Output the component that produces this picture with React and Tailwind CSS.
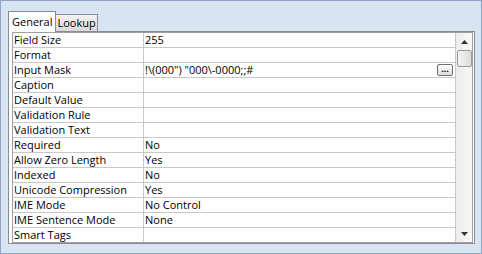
const rows = [
  ['Field Size', '255'],
  ['Format', ''],
  ['Input Mask', '!\\(000") "000\\-0000;;#', true],
  ['Caption', ''],
  ['Default Value', ''],
  ['Validation Rule', ''],
  ['Validation Text', ''],
  ['Required', 'No'],
  ['Allow Zero Length', 'Yes'],
  ['Indexed', 'No'],
  ['Unicode Compression', 'Yes'],
  ['IME Mode', 'No Control'],
  ['IME Sentence Mode', 'None'],
  ['Smart Tags', ''],
]

function PropRow({ label, value, button }) {
  return (
    <div className="flex h-[15px] border-b border-[#c8c8c8] last:border-b-0 last:h-[14px] leading-[14px]">
      <div className="w-[131px] shrink-0 border-r border-[#c8c8c8] pl-[1px]">{label}</div>
      <div className="flex-1 flex items-center pl-[1px] pr-[2px]">
        <span className="flex-1">{value}</span>
        {button && (
          <span className="h-[12px] w-[16px] border border-[#707070] rounded-[2px] bg-gradient-to-b from-white to-[#dcdcdc] flex items-center justify-center text-[9px] leading-none font-bold pb-[3px]">
            ...
          </span>
        )}
      </div>
    </div>
  )
}

export default function App() {
  return (
    <div
      className="w-[482px] h-[254px] bg-[#d7e4f2] border border-[#8ea4c2] pl-[7px] pt-[10px] text-[11px] text-black"
      style={{ fontFamily: '"Open Sans", "Noto Sans", sans-serif' }}
    >
      <div className="flex items-end h-[20px]">
        <div className="relative z-10 h-[21px] -mb-px px-[3px] bg-white border border-b-0 border-[#898c95] leading-[19px]">
          General
        </div>
        <div className="h-[17px] px-[1px] bg-gradient-to-b from-[#f2f2f2] to-[#dadada] border border-l-0 border-b-0 border-[#898c95] leading-[16px]">
          Lookup
        </div>
      </div>
      <div className="w-[467px] h-[213px] bg-white border border-[#898c95] pl-[3px]">
        <div className="flex w-[461px] h-[211px] border border-[#a0a0a0]">
          <div className="flex-1">
            {rows.map(([l, v, b]) => (
              <PropRow key={l} label={l} value={v} button={b} />
            ))}
          </div>
          <div className="w-[17px] border-l border-[#c8c8c8] bg-gradient-to-r from-[#ececec] to-[#f8f8f8] flex flex-col items-center">
            <div className="h-[17px] flex items-center justify-center">
              <svg width="7" height="4" viewBox="0 0 7 4"><path d="M3.5 0L7 4H0z" fill="#333" /></svg>
            </div>
            <div className="w-[15px] h-[17px] rounded-[2px] border border-[#9a9a9a] bg-gradient-to-r from-[#f4f4f4] to-[#dcdcdc]" />
            <div className="flex-1" />
            <div className="h-[17px] flex items-center justify-center">
              <svg width="7" height="4" viewBox="0 0 7 4"><path d="M0 0H7L3.5 4z" fill="#333" /></svg>
            </div>
          </div>
        </div>
      </div>
    </div>
  )
}
